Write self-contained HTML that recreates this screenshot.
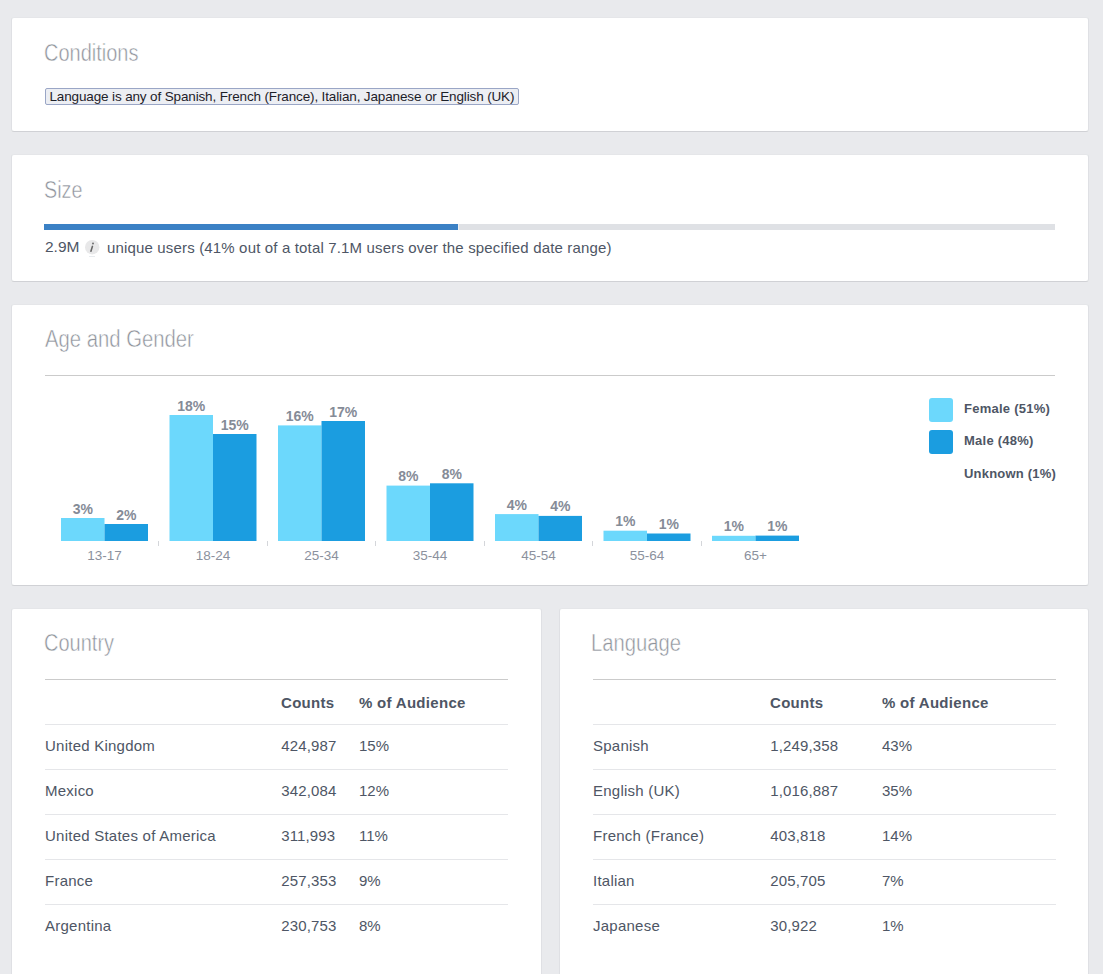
<!DOCTYPE html>
<html><head><meta charset="utf-8"><style>
html,body{margin:0;padding:0;width:1103px;height:974px;overflow:hidden;background:#e9eaed;font-family:"Liberation Sans", sans-serif;}
.t{position:absolute;white-space:pre;}
.r{position:absolute;}
.card{position:absolute;background:#fff;border:1px solid;border-color:#e5e6e9 #dfe0e4 #d0d1d5;border-radius:3px;}
.pill{position:absolute;background:#eceef3;border:1px solid #9aa6c6;border-radius:2px;}
.chart text{font-family:"Liberation Sans", sans-serif;font-size:13px;fill:#9197a3;text-anchor:middle;}
.chart text.bl{font-weight:700;font-size:14px;fill:#858b97;}
.chart text.al{font-size:13.5px;fill:#8b919d;}
</style></head><body>
<div class="card" style="left:11px;top:17px;width:1076px;height:113px"></div>
<div class="card" style="left:11px;top:154px;width:1076px;height:126px"></div>
<div class="card" style="left:11px;top:304px;width:1076px;height:280px"></div>
<div class="card" style="left:11px;top:608px;width:529px;height:418px"></div>
<div class="card" style="left:559px;top:608px;width:528px;height:418px"></div>
<div class="t" style="left:44px;top:41.5px;font-size:23px;line-height:23px;color:#8e939b;transform:scaleX(0.869);transform-origin:0 0;-webkit-text-stroke:0.5px #fff;">Conditions</div>
<div class="pill" style="left:45px;top:88px;width:472px;height:15px"></div>
<div class="t" style="left:49.5px;top:90.07px;font-size:13.5px;line-height:13.5px;font-weight:400;color:#1d2129;letter-spacing:-0.14px;">Language is any of Spanish, French (France), Italian, Japanese or English (UK)</div>
<div class="t" style="left:44px;top:179px;font-size:23px;line-height:23px;color:#8e939b;transform:scaleX(0.86);transform-origin:0 0;-webkit-text-stroke:0.5px #fff;">Size</div>
<div class="r" style="left:44px;top:224px;width:1011px;height:6px;background:#dfe1e5;"></div>
<div class="r" style="left:44px;top:224px;width:414px;height:6px;background:#3b81c5;"></div>
<div class="r" style="left:458px;top:224px;width:1px;height:6px;background:#eef0f2;"></div>
<div class="t" style="left:45px;top:239.48px;font-size:15.5px;line-height:15.5px;font-weight:400;color:#4e5665;">2.9M</div>
<svg style="position:absolute;left:80px;top:235px" width="25" height="25" viewBox="0 0 25 25"><circle cx="12.2" cy="12.2" r="7.2" fill="#e8e8e9"/><circle cx="13.0" cy="8.5" r="1.05" fill="#777"/><path d="M12.4 11.4 L10.9 16.3" stroke="#666" stroke-width="1.55" stroke-linecap="round"/><rect x="9" y="21" width="6" height="0.8" fill="#e3e6ea"/></svg>
<div class="t" style="left:107px;top:240.30px;font-size:15px;line-height:15px;font-weight:400;color:#4e5665;letter-spacing:0.16px;">unique users (41% out of a total 7.1M users over the specified date range)</div>
<div class="t" style="left:45px;top:328px;font-size:23px;line-height:23px;color:#8e939b;transform:scaleX(0.882);transform-origin:0 0;-webkit-text-stroke:0.5px #fff;">Age and Gender</div>
<div class="r" style="left:45px;top:375px;width:1010px;height:1px;background:#cbcbcb;"></div>
<svg class="chart" width="1103" height="974" viewBox="0 0 1103 974" style="position:absolute;left:0;top:0"><rect x="61.00" y="518" width="43.5" height="23.00" fill="#6cd8fc"/><rect x="104.50" y="524" width="43.5" height="17.00" fill="#1b9de0"/><text x="82.75" y="513.50" class="bl">3%</text><text x="126.25" y="519.50" class="bl">2%</text><text x="104.50" y="560" class="al">13-17</text><rect x="158" y="541" width="1" height="5" fill="#d4d6da"/><rect x="169.50" y="415" width="43.5" height="126.00" fill="#6cd8fc"/><rect x="213.00" y="434" width="43.5" height="107.00" fill="#1b9de0"/><text x="191.25" y="410.50" class="bl">18%</text><text x="234.75" y="429.50" class="bl">15%</text><text x="213.00" y="560" class="al">18-24</text><rect x="267" y="541" width="1" height="5" fill="#d4d6da"/><rect x="278.00" y="425.4" width="43.5" height="115.60" fill="#6cd8fc"/><rect x="321.50" y="421" width="43.5" height="120.00" fill="#1b9de0"/><text x="299.75" y="420.90" class="bl">16%</text><text x="343.25" y="416.50" class="bl">17%</text><text x="321.50" y="560" class="al">25-34</text><rect x="375" y="541" width="1" height="5" fill="#d4d6da"/><rect x="386.50" y="485.6" width="43.5" height="55.40" fill="#6cd8fc"/><rect x="430.00" y="483.3" width="43.5" height="57.70" fill="#1b9de0"/><text x="408.25" y="481.10" class="bl">8%</text><text x="451.75" y="478.80" class="bl">8%</text><text x="430.00" y="560" class="al">35-44</text><rect x="484" y="541" width="1" height="5" fill="#d4d6da"/><rect x="495.00" y="514.1" width="43.5" height="26.90" fill="#6cd8fc"/><rect x="538.50" y="515.9" width="43.5" height="25.10" fill="#1b9de0"/><text x="516.75" y="509.60" class="bl">4%</text><text x="560.25" y="511.40" class="bl">4%</text><text x="538.50" y="560" class="al">45-54</text><rect x="592" y="541" width="1" height="5" fill="#d4d6da"/><rect x="603.50" y="530.7" width="43.5" height="10.30" fill="#6cd8fc"/><rect x="647.00" y="533.5" width="43.5" height="7.50" fill="#1b9de0"/><text x="625.25" y="526.20" class="bl">1%</text><text x="668.75" y="529.00" class="bl">1%</text><text x="647.00" y="560" class="al">55-64</text><rect x="701" y="541" width="1" height="5" fill="#d4d6da"/><rect x="712.00" y="535.8" width="43.5" height="5.20" fill="#6cd8fc"/><rect x="755.50" y="535.6" width="43.5" height="5.40" fill="#1b9de0"/><text x="733.75" y="531.30" class="bl">1%</text><text x="777.25" y="531.10" class="bl">1%</text><text x="755.50" y="560" class="al">65+</text></svg>
<div class="r" style="left:929px;top:398px;width:24px;height:24px;background:#6cd8fc;border-radius:3px;"></div>
<div class="r" style="left:929px;top:430px;width:24px;height:24px;background:#1b9de0;border-radius:3px;"></div>
<div class="t" style="left:964px;top:402.00px;font-size:13px;line-height:13px;font-weight:700;color:#4e5665;letter-spacing:0.25px;">Female (51%)</div>
<div class="t" style="left:964px;top:434.00px;font-size:13px;line-height:13px;font-weight:700;color:#4e5665;letter-spacing:0.25px;">Male (48%)</div>
<div class="t" style="left:964px;top:467.00px;font-size:13px;line-height:13px;font-weight:700;color:#4e5665;letter-spacing:0.2px;">Unknown (1%)</div>
<div class="t" style="left:44px;top:632px;font-size:23px;line-height:23px;color:#8e939b;transform:scaleX(0.87);transform-origin:0 0;-webkit-text-stroke:0.5px #fff;">Country</div>
<div class="r" style="left:45px;top:679px;width:463px;height:1px;background:#cbcbcb;"></div>
<div class="t" style="left:281px;top:695.30px;font-size:15px;line-height:15px;font-weight:700;color:#4e5665;letter-spacing:0.3px;">Counts</div>
<div class="t" style="left:359px;top:695.30px;font-size:15px;line-height:15px;font-weight:700;color:#4e5665;letter-spacing:0.3px;">% of Audience</div>
<div class="r" style="left:45px;top:724px;width:463px;height:1px;background:#e5e6e9;"></div>
<div class="t" style="left:45px;top:738.30px;font-size:15px;line-height:15px;font-weight:400;color:#4e5665;letter-spacing:0.24px;">United Kingdom</div>
<div class="t" style="left:281.3px;top:738.30px;font-size:15px;line-height:15px;font-weight:400;color:#4e5665;letter-spacing:0.12px;">424,987</div>
<div class="t" style="left:359px;top:738.30px;font-size:15px;line-height:15px;font-weight:400;color:#4e5665;">15%</div>
<div class="r" style="left:45px;top:769px;width:463px;height:1px;background:#e5e6e9;"></div>
<div class="t" style="left:45px;top:783.30px;font-size:15px;line-height:15px;font-weight:400;color:#4e5665;letter-spacing:0.24px;">Mexico</div>
<div class="t" style="left:281.3px;top:783.30px;font-size:15px;line-height:15px;font-weight:400;color:#4e5665;letter-spacing:0.12px;">342,084</div>
<div class="t" style="left:359px;top:783.30px;font-size:15px;line-height:15px;font-weight:400;color:#4e5665;">12%</div>
<div class="r" style="left:45px;top:814px;width:463px;height:1px;background:#e5e6e9;"></div>
<div class="t" style="left:45px;top:828.30px;font-size:15px;line-height:15px;font-weight:400;color:#4e5665;letter-spacing:0.24px;">United States of America</div>
<div class="t" style="left:281.3px;top:828.30px;font-size:15px;line-height:15px;font-weight:400;color:#4e5665;letter-spacing:0.12px;">311,993</div>
<div class="t" style="left:359px;top:828.30px;font-size:15px;line-height:15px;font-weight:400;color:#4e5665;">11%</div>
<div class="r" style="left:45px;top:859px;width:463px;height:1px;background:#e5e6e9;"></div>
<div class="t" style="left:45px;top:873.30px;font-size:15px;line-height:15px;font-weight:400;color:#4e5665;letter-spacing:0.24px;">France</div>
<div class="t" style="left:281.3px;top:873.30px;font-size:15px;line-height:15px;font-weight:400;color:#4e5665;letter-spacing:0.12px;">257,353</div>
<div class="t" style="left:359px;top:873.30px;font-size:15px;line-height:15px;font-weight:400;color:#4e5665;">9%</div>
<div class="r" style="left:45px;top:904px;width:463px;height:1px;background:#e5e6e9;"></div>
<div class="t" style="left:45px;top:918.30px;font-size:15px;line-height:15px;font-weight:400;color:#4e5665;letter-spacing:0.24px;">Argentina</div>
<div class="t" style="left:281.3px;top:918.30px;font-size:15px;line-height:15px;font-weight:400;color:#4e5665;letter-spacing:0.12px;">230,753</div>
<div class="t" style="left:359px;top:918.30px;font-size:15px;line-height:15px;font-weight:400;color:#4e5665;">8%</div>
<div class="t" style="left:591px;top:632px;font-size:23px;line-height:23px;color:#8e939b;transform:scaleX(0.88);transform-origin:0 0;-webkit-text-stroke:0.5px #fff;">Language</div>
<div class="r" style="left:593px;top:679px;width:463px;height:1px;background:#cbcbcb;"></div>
<div class="t" style="left:770px;top:695.30px;font-size:15px;line-height:15px;font-weight:700;color:#4e5665;letter-spacing:0.3px;">Counts</div>
<div class="t" style="left:882px;top:695.30px;font-size:15px;line-height:15px;font-weight:700;color:#4e5665;letter-spacing:0.3px;">% of Audience</div>
<div class="r" style="left:593px;top:724px;width:463px;height:1px;background:#e5e6e9;"></div>
<div class="t" style="left:593px;top:738.30px;font-size:15px;line-height:15px;font-weight:400;color:#4e5665;letter-spacing:0.24px;">Spanish</div>
<div class="t" style="left:770.3px;top:738.30px;font-size:15px;line-height:15px;font-weight:400;color:#4e5665;letter-spacing:0.12px;">1,249,358</div>
<div class="t" style="left:882px;top:738.30px;font-size:15px;line-height:15px;font-weight:400;color:#4e5665;">43%</div>
<div class="r" style="left:593px;top:769px;width:463px;height:1px;background:#e5e6e9;"></div>
<div class="t" style="left:593px;top:783.30px;font-size:15px;line-height:15px;font-weight:400;color:#4e5665;letter-spacing:0.24px;">English (UK)</div>
<div class="t" style="left:770.3px;top:783.30px;font-size:15px;line-height:15px;font-weight:400;color:#4e5665;letter-spacing:0.12px;">1,016,887</div>
<div class="t" style="left:882px;top:783.30px;font-size:15px;line-height:15px;font-weight:400;color:#4e5665;">35%</div>
<div class="r" style="left:593px;top:814px;width:463px;height:1px;background:#e5e6e9;"></div>
<div class="t" style="left:593px;top:828.30px;font-size:15px;line-height:15px;font-weight:400;color:#4e5665;letter-spacing:0.24px;">French (France)</div>
<div class="t" style="left:770.3px;top:828.30px;font-size:15px;line-height:15px;font-weight:400;color:#4e5665;letter-spacing:0.12px;">403,818</div>
<div class="t" style="left:882px;top:828.30px;font-size:15px;line-height:15px;font-weight:400;color:#4e5665;">14%</div>
<div class="r" style="left:593px;top:859px;width:463px;height:1px;background:#e5e6e9;"></div>
<div class="t" style="left:593px;top:873.30px;font-size:15px;line-height:15px;font-weight:400;color:#4e5665;letter-spacing:0.24px;">Italian</div>
<div class="t" style="left:770.3px;top:873.30px;font-size:15px;line-height:15px;font-weight:400;color:#4e5665;letter-spacing:0.12px;">205,705</div>
<div class="t" style="left:882px;top:873.30px;font-size:15px;line-height:15px;font-weight:400;color:#4e5665;">7%</div>
<div class="r" style="left:593px;top:904px;width:463px;height:1px;background:#e5e6e9;"></div>
<div class="t" style="left:593px;top:918.30px;font-size:15px;line-height:15px;font-weight:400;color:#4e5665;letter-spacing:0.24px;">Japanese</div>
<div class="t" style="left:770.3px;top:918.30px;font-size:15px;line-height:15px;font-weight:400;color:#4e5665;letter-spacing:0.12px;">30,922</div>
<div class="t" style="left:882px;top:918.30px;font-size:15px;line-height:15px;font-weight:400;color:#4e5665;">1%</div>
</body></html>
